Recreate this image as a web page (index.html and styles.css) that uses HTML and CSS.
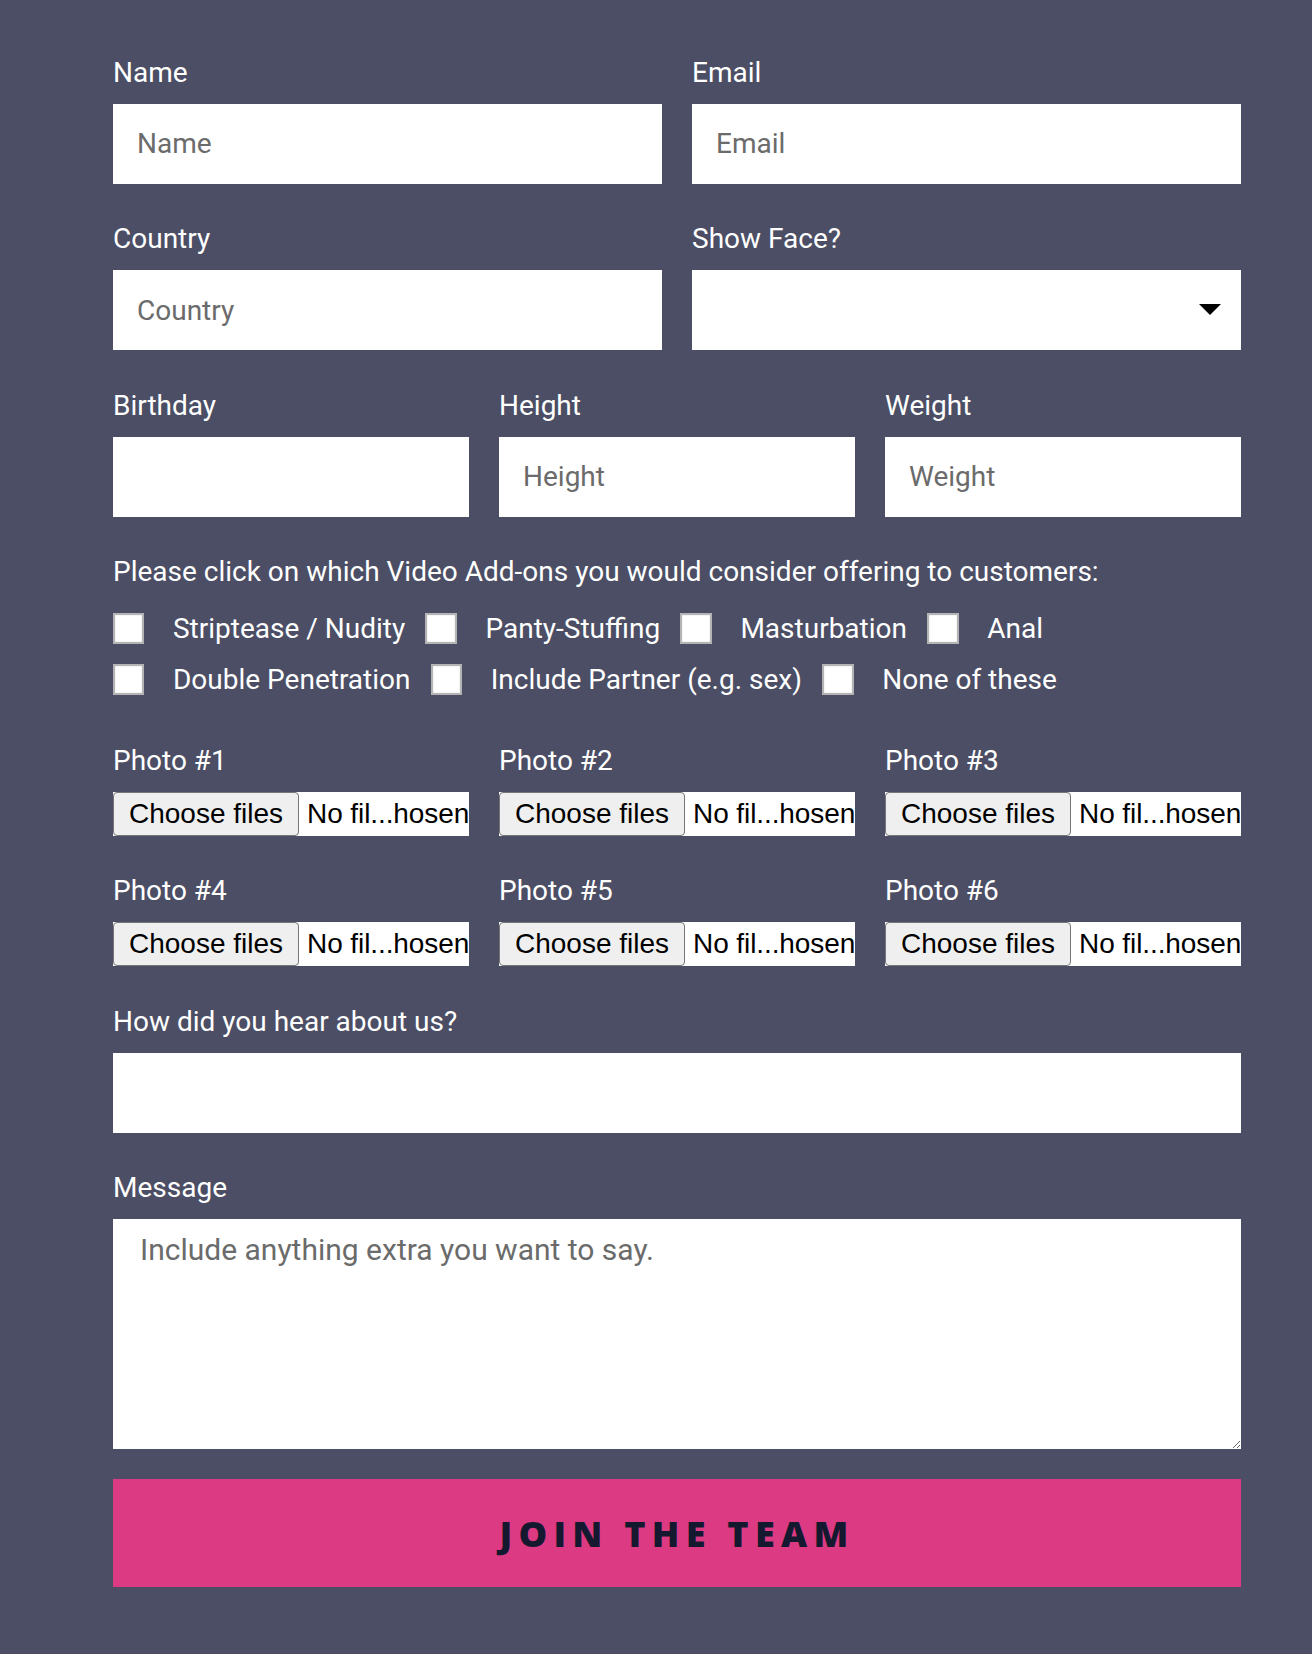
FILE: index.html
```html
<!DOCTYPE html>
<html lang="en">
<head>
<meta charset="utf-8">
<title>Join the team</title>
<link rel="stylesheet" href="styles.css">
</head>
<body>
<form class="form">
  <div class="row row-2">
    <div class="field">
      <label class="label" for="name">Name</label>
      <input class="input" id="name" type="text" placeholder="Name">
    </div>
    <div class="field">
      <label class="label" for="email">Email</label>
      <input class="input" id="email" type="email" placeholder="Email">
    </div>
  </div>
  <div class="row row-2">
    <div class="field">
      <label class="label" for="country">Country</label>
      <input class="input" id="country" type="text" placeholder="Country">
    </div>
    <div class="field">
      <label class="label" for="face">Show Face?</label>
      <div class="select-wrap">
        <select class="input select" id="face">
          <option></option>
          <option>Yes</option>
          <option>No</option>
        </select>
      </div>
    </div>
  </div>
  <div class="row row-3">
    <div class="field">
      <label class="label" for="birthday">Birthday</label>
      <input class="input" id="birthday" type="text">
    </div>
    <div class="field">
      <label class="label" for="height">Height</label>
      <input class="input" id="height" type="text" placeholder="Height">
    </div>
    <div class="field">
      <label class="label" for="weight">Weight</label>
      <input class="input" id="weight" type="text" placeholder="Weight">
    </div>
  </div>
  <div class="row">
    <p class="label question">Please click on which Video Add-ons you would consider offering to customers:</p>
    <div class="checks">
      <label class="check"><input type="checkbox" class="box"><span>Striptease / Nudity</span></label>
      <label class="check"><input type="checkbox" class="box"><span>Panty-Stuffing</span></label>
      <label class="check"><input type="checkbox" class="box"><span>Masturbation</span></label>
      <label class="check"><input type="checkbox" class="box"><span>Anal</span></label>
      <label class="check"><input type="checkbox" class="box"><span>Double Penetration</span></label>
      <label class="check"><input type="checkbox" class="box"><span>Include Partner (e.g. sex)</span></label>
      <label class="check"><input type="checkbox" class="box"><span>None of these</span></label>
    </div>
  </div>
  <div class="row row-3 photos">
    <div class="field">
      <span class="label">Photo #1</span>
      <label class="file"><span class="file-btn">Choose files</span><span class="file-name">No fil...hosen</span></label>
    </div>
    <div class="field">
      <span class="label">Photo #2</span>
      <label class="file"><span class="file-btn">Choose files</span><span class="file-name">No fil...hosen</span></label>
    </div>
    <div class="field">
      <span class="label">Photo #3</span>
      <label class="file"><span class="file-btn">Choose files</span><span class="file-name">No fil...hosen</span></label>
    </div>
  </div>
  <div class="row row-3">
    <div class="field">
      <span class="label">Photo #4</span>
      <label class="file"><span class="file-btn">Choose files</span><span class="file-name">No fil...hosen</span></label>
    </div>
    <div class="field">
      <span class="label">Photo #5</span>
      <label class="file"><span class="file-btn">Choose files</span><span class="file-name">No fil...hosen</span></label>
    </div>
    <div class="field">
      <span class="label">Photo #6</span>
      <label class="file"><span class="file-btn">Choose files</span><span class="file-name">No fil...hosen</span></label>
    </div>
  </div>
  <div class="row">
    <label class="label" for="hear">How did you hear about us?</label>
    <input class="input" id="hear" type="text">
  </div>
  <div class="row">
    <label class="label" for="msg">Message</label>
    <textarea class="input textarea" id="msg" placeholder="Include anything extra you want to say."></textarea>
  </div>
  <button class="submit" type="submit">Join the team</button>
</form>
</body>
</html>
```

FILE: styles.css
```css
* { box-sizing: border-box; }

html, body {
  margin: 0;
  padding: 0;
  background: #4b4e64;
}

body {
  font-family: Roboto, "Liberation Sans", sans-serif;
  color: #ffffff;
}

.form {
  width: 1128px;
  margin-left: 113px;
  padding-top: 17.2px;
  padding-bottom: 68px;
}

.row {
  margin-top: 38.4px;
}

.row-2 {
  display: grid;
  grid-template-columns: 1fr 1fr;
  column-gap: 30px;
}

.row-3 {
  display: grid;
  grid-template-columns: 1fr 1fr 1fr;
  column-gap: 30px;
}

.field {
  display: flex;
  flex-direction: column;
  min-width: 0;
}

.label {
  display: block;
  margin: 0 0 15.1px;
  font-size: 28px;
  line-height: 33px;
  color: #ffffff;
}

.input {
  display: block;
  width: 100%;
  height: 80px;
  margin: 0;
  padding: 0 24px;
  border: none;
  border-radius: 0;
  background: #ffffff;
  font-family: Roboto, "Liberation Sans", sans-serif;
  font-size: 28px;
  color: #222;
  outline: none;
}

.input::placeholder {
  color: #6b6b6b;
  opacity: 1;
}

.select-wrap {
  position: relative;
}

.select {
  appearance: none;
  -webkit-appearance: none;
}

.select-wrap::after {
  content: "";
  position: absolute;
  right: 20px;
  top: 34px;
  border-left: 11px solid transparent;
  border-right: 11px solid transparent;
  border-top: 11px solid #000;
  pointer-events: none;
}

.question {
  margin-bottom: 24.5px;
}

.checks {
  display: flex;
  flex-wrap: wrap;
  column-gap: 20.3px;
  row-gap: 19.8px;
  width: 960px;
}

.check {
  display: flex;
  align-items: center;
  font-size: 28px;
  line-height: 33px;
  height: 31.4px;
}

.box {
  appearance: none;
  -webkit-appearance: none;
  width: 31.4px;
  height: 31.4px;
  margin: 0 28.6px 0 0;
  border: 2px solid #b4b4b4;
  background: #ffffff;
  box-shadow: inset 0 0 2px rgba(0,0,0,0.15);
  flex: none;
}

.photos {
  margin-top: 48.8px;
}

.file {
  display: flex;
  align-items: center;
  height: 44px;
  background: #ffffff;
  overflow: hidden;
  font-family: "Liberation Sans", Arial, sans-serif;
  font-size: 28px;
  color: #000;
}

.file-btn {
  display: flex;
  align-items: center;
  height: 100%;
  padding: 0 15px;
  border: 1px solid #767676;
  border-radius: 4px;
  background: #efefef;
  white-space: nowrap;
  flex: none;
}

.file-name {
  margin-left: 8px;
  white-space: nowrap;
  letter-spacing: -0.1px;
}

.textarea {
  height: 230px;
  padding: 12.5px 27px;
  resize: vertical;
  font-size: 30px;
  line-height: 1.2;
}

.submit {
  display: block;
  width: 100%;
  height: 107.5px;
  margin-top: 30px;
  border: none;
  background: #dc3a82;
  color: #14192f;
  font-family: "Open Sans", Lato, sans-serif;
  font-weight: 800;
  font-size: 36px;
  letter-spacing: 6.3px;
  text-transform: uppercase;
  cursor: pointer;
}
```
